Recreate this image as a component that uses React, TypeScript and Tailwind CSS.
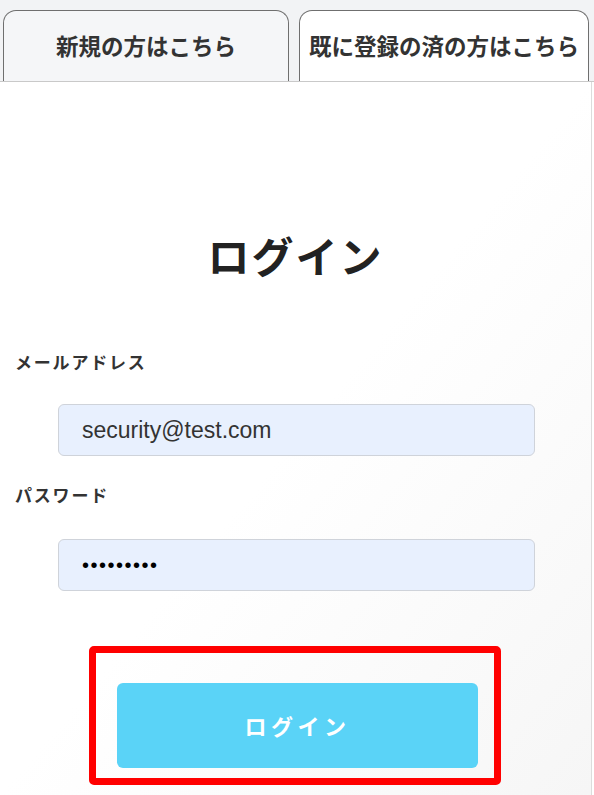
import { useState } from "react";

const jp = { fontFamily: '"Noto Sans CJK JP", "Noto Sans", sans-serif' };

const tabs = ["新規の方はこちら", "既に登録の済の方はこちら"];

export default function App() {
  const [active, setActive] = useState(1);
  const [email, setEmail] = useState("security@test.com");
  const [password, setPassword] = useState("password1");

  return (
    <div className="w-[594px] h-[795px] bg-white overflow-hidden" style={jp}>
      <div className="flex items-end h-[82px] bg-[#f2f3f5] pl-[3px] border-b border-[#c9c9c9]">
        {tabs.map((tab, i) => (
          <button
            key={tab}
            onClick={() => setActive(i)}
            className={`h-[71px] ${i === 0 ? "w-[286px]" : "w-[290px] ml-[10px]"} rounded-t-[13px] border-[1.5px] border-b-0 border-[#6f6f6f] flex items-center justify-center text-[22.5px] font-bold text-[#333] whitespace-nowrap ${
              active === i ? "bg-white" : "bg-[#f5f6f8]"
            }`}
          >
            {tab}
          </button>
        ))}
      </div>

      <div className="w-[592px] h-[713px] border-r border-[#dcdcdc] bg-gradient-to-br from-white via-white to-[#f6f6f6]">
        <h1 className="pt-[152px] text-center text-[42px] leading-[42px] font-bold text-[#222] tracking-[2px]">
          ログイン
        </h1>

        <label className="block mt-[77px] pl-[15px] text-[17px] leading-[17px] font-bold text-[#333] tracking-[1.8px]">
          メールアドレス
        </label>
        <input
          type="email"
          value={email}
          onChange={(e) => setEmail(e.target.value)}
          className="block mt-[34px] ml-[58px] w-[477px] h-[52px] rounded-[6px] border border-[#cfd3da] bg-[#e8f0fe] px-[23px] text-[23px] text-[#333] outline-none"
          style={{ fontFamily: '"Liberation Sans", Arial, sans-serif' }}
        />

        <label className="block mt-[30px] pl-[15px] text-[17px] leading-[17px] font-bold text-[#333] tracking-[1.8px]">
          パスワード
        </label>
        <input
          type="password"
          value={password}
          onChange={(e) => setPassword(e.target.value)}
          className="block mt-[36px] ml-[58px] w-[477px] h-[52px] rounded-[6px] border border-[#cfd3da] bg-[#e8f0fe] px-[23px] text-[20px] tracking-[1.5px] text-black outline-none"
          style={{ fontFamily: '"Liberation Sans", Arial, sans-serif' }}
        />

        <div className="mt-[55px] ml-[89px] w-[412px] h-[139px] border-[7px] border-[#ff0000] rounded-[5px] pt-[30px] pl-[21px]">
          <button className="w-[361px] h-[85px] rounded-[6px] bg-[#5ad3f7] text-white text-[22px] font-bold tracking-[4.5px]">
            ログイン
          </button>
        </div>
      </div>
    </div>
  );
}
